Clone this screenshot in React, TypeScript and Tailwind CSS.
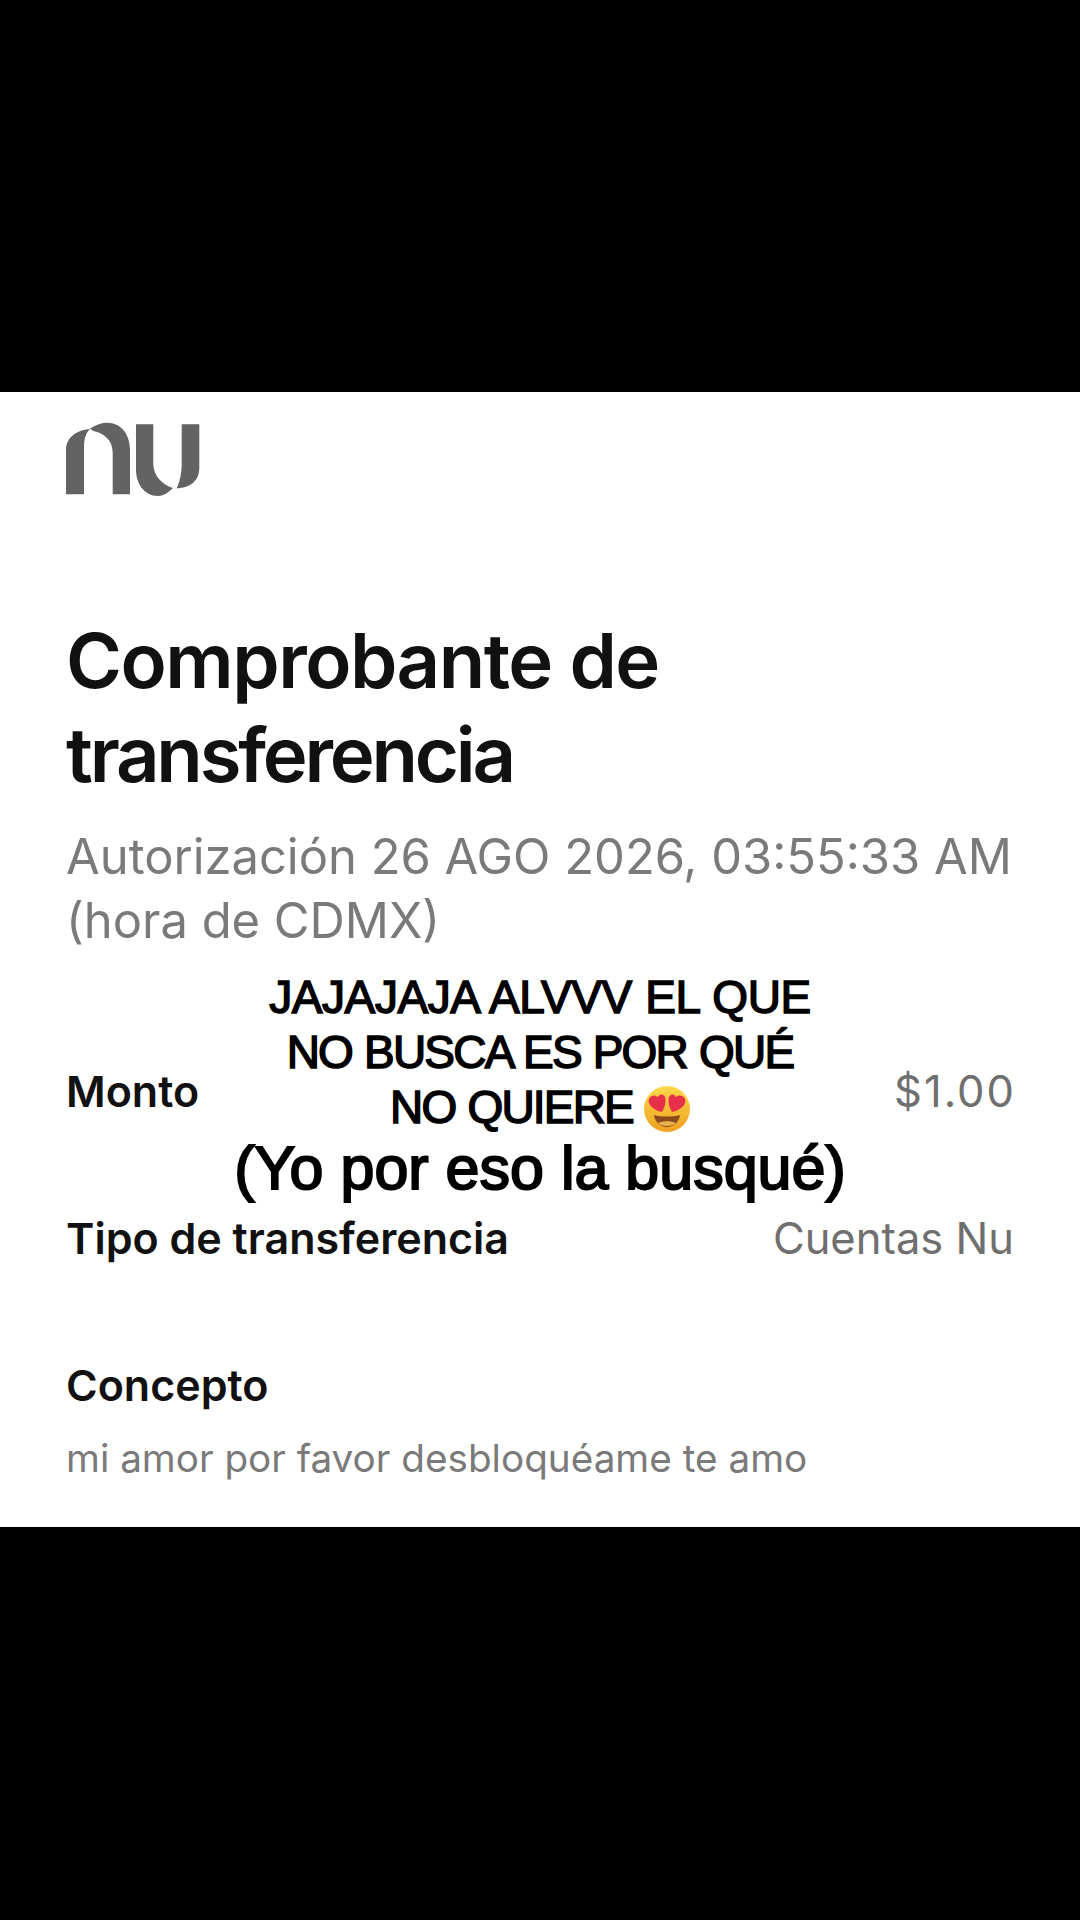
const sans = "font-['Inter',sans-serif]";
const caption = "font-['Liberation_Sans',sans-serif] [-webkit-text-stroke:1.5px_black]";

const NuLogo = () => (
  <svg viewBox="0 -1 134 75" className="h-[75px] w-[134px]" fill="#636363">
    <path d="M0 71.300V27C0 15 10 7 24 6C20 10 18 15 18 24V71.300Z" />
    <path d="M24 5.500C30 1.500 36 -0.300 41 -0.300C55 -0.300 64 11 64 27V71.300H46.700V30C46.700 17 38 10 27.300 8Z" />
    <path d="M70 1.300H87.300V41C87.300 52 96 62 107 65C102 70 97 73 92 73C78 73 70 60 70 47Z" />
    <path d="M115.700 1.300H133.300V45C133.300 58 124 65 110.700 65.300C114 58 115.700 50 115.700 41Z" />
  </svg>
);

// heart eyes face used in the caption
const HeartEyes = () => (
  <svg viewBox="0 0 46 46" className="mt-[3px] inline-block h-[46px] w-[46px]">
    <defs>
      <linearGradient id="face" x1="0" y1="0" x2="0" y2="1">
        <stop offset="0" stopColor="#fbd94a" />
        <stop offset="1" stopColor="#f0a020" />
      </linearGradient>
    </defs>
    <circle cx="23" cy="23" r="23" fill="url(#face)" />
    <path d="M5 17C3 11 10 7 14 11C16 7 21 8 21.500 13C22 18 20 22 18 26C13 25 7 22 5 17Z" fill="#e8304a" />
    <path d="M24.500 13C25 8 30 7 32 11C36 7 43 11 41 17C39 22 33 25 28 26C26 22 24 18 24.500 13Z" fill="#e8304a" />
    <path d="M10 29C16 31 30 31 36 29C35 36 30 41 23 41C16 41 11 36 10 29Z" fill="#8a4a1c" />
    <path d="M14 37C19 34.500 27 34.500 32 37C29 41 17 41 14 37Z" fill="#e9b24c" />
  </svg>
);

const Row = ({ label, value, valueClass = "" }: { label: string; value: string; valueClass?: string }) => (
  <div className="flex items-center justify-between">
    <span className="text-[43px] font-semibold leading-[48px] text-[#111111]">{label}</span>
    <span className={`text-[43.500px] leading-[48px] text-[#6f6f6f] ${valueClass}`}>{value}</span>
  </div>
);

export default function App() {
  return (
    <div className="flex h-[1920px] w-[1080px] flex-col bg-black">
      <div className="h-[392px]" />
      <div className={`relative h-[1135px] bg-white px-[66px] ${sans}`}>
        <div className="pt-[30px]">
          <NuLogo />
        </div>
        <h1 className="mt-[116px] text-[76px] font-semibold leading-[94px] tracking-[-1.5px] text-[#111111]">
          Comprobante de
          <br />
          <span className="tracking-[-3.2px]">transferencia</span>
        </h1>
        <p className="mt-[24px] text-[48.900px] leading-[64px] text-[#7a7a7a]">
          Autorización 26 AGO 2026, 03:55:33 AM
          <br />
          (hora de CDMX)
        </p>
        <div className="mt-[114px]">
          <Row label="Monto" value="$1.00" valueClass="-mr-[2px] tracking-[2px]" />
        </div>
        <div className="mt-[99px]">
          <Row label="Tipo de transferencia" value="Cuentas Nu" />
        </div>
        <p className="mt-[99px] text-[43px] font-semibold leading-[48px] text-[#111111]">Concepto</p>
        <p className="mt-[25px] text-[38.700px] leading-[48px] text-[#7a7a7a]">
          mi amor por favor desbloquéame te amo
        </p>

        {/* caption laid over the receipt */}
        <div className={`absolute left-0 right-0 top-[578px] text-center text-black ${caption}`}>
          <p className="text-[46px] leading-[55px] tracking-[-0.4px] [word-spacing:1px]">JAJAJAJA ALVVV EL QUE</p>
          <p className="text-[46px] leading-[55px] tracking-[-1.8px] [word-spacing:1px]">NO BUSCA ES POR QUÉ</p>
          <p className="flex items-center justify-center gap-[11px] text-[46px] leading-[55px] tracking-[-1.8px] [word-spacing:1px]">
            NO QUIERE <HeartEyes />
          </p>
          <p className="text-[61px] leading-[66px] [-webkit-text-stroke:2px_black]">(Yo por eso la busqué)</p>
        </div>
      </div>
    </div>
  );
}
